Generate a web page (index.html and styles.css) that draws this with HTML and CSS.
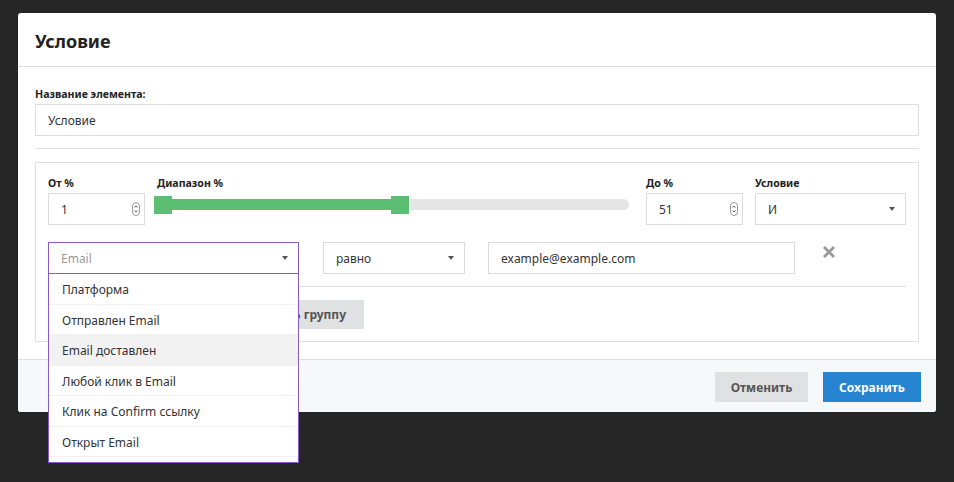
FILE: index.html
```html
<!DOCTYPE html>
<html lang="ru">
<head>
    <meta charset="UTF-8">
    <meta name="viewport" content="width=device-width, initial-scale=1.0">
    <title>Условие</title>
    <link rel="stylesheet" href="styles.css">
</head>
<body>

    <div class="page">
        <div class="modal">
            <div class="modal-header">
                <h2>Условие</h2>
            </div>

            <div class="modal-body">
                <label class="field-label">Название элемента:</label>
                <div class="text-input">Условие</div>

                <div class="divider"></div>

                <div class="group">
                    <div class="range-row">
                        <div class="col-from">
                            <label class="field-label">От %</label>
                            <div class="num-input">
                                <span>1</span>
                                <svg class="spin" width="8" height="14" viewBox="0 0 8 14"><rect x="0.5" y="0.5" width="7" height="13" rx="3.5" fill="#fff" stroke="#999"/><path d="M2.5 5.5 L4 4 L5.5 5.5 M2.5 8.5 L4 10 L5.5 8.5" fill="none" stroke="#555" stroke-width="1"/></svg>
                            </div>
                        </div>
                        <div class="col-range">
                            <label class="field-label range-label">Диапазон %</label>
                            <div class="range">
                                <div class="range-fill" style="width: 51.5%"></div>
                                <span class="handle" style="left: 0%"></span>
                                <span class="handle" style="left: 49.8%"></span>
                            </div>
                        </div>
                        <div class="col-to">
                            <label class="field-label">До %</label>
                            <div class="num-input">
                                <span>51</span>
                                <svg class="spin" width="8" height="14" viewBox="0 0 8 14"><rect x="0.5" y="0.5" width="7" height="13" rx="3.5" fill="#fff" stroke="#999"/><path d="M2.5 5.5 L4 4 L5.5 5.5 M2.5 8.5 L4 10 L5.5 8.5" fill="none" stroke="#555" stroke-width="1"/></svg>
                            </div>
                        </div>
                        <div class="col-cond">
                            <label class="field-label">Условие</label>
                            <div class="select">
                                <span>И</span>
                                <span class="caret"></span>
                            </div>
                        </div>
                    </div>

                    <div class="rule-row">
                        <div class="rule-field">
                            <div class="select select-open">
                                <span class="placeholder">Email</span>
                                <span class="caret"></span>
                            </div>
                            <ul class="dropdown">
                                <li>Платформа</li>
                                <li>Отправлен Email</li>
                                <li class="active">Email доставлен</li>
                                <li>Любой клик в Email</li>
                                <li>Клик на Confirm ссылку</li>
                                <li>Открыт Email</li>
                            </ul>
                        </div>
                        <div class="select rule-op">
                            <span>равно</span>
                            <span class="caret"></span>
                        </div>
                        <div class="text-input rule-value">example@example.com</div>
                        <svg class="remove" width="12" height="12" viewBox="0 0 12 12"><path d="M2 0 L6 4 L10 0 L12 2 L8 6 L12 10 L10 12 L6 8 L2 12 L0 10 L4 6 L0 2 Z" fill="#9a9a9a"/></svg>
                    </div>

                    <div class="group-divider"></div>

                    <div class="group-actions">
                        <button class="btn btn-light btn-add-group">Добавить группу</button>
                    </div>
                </div>
            </div>

            <div class="modal-footer">
                <button class="btn btn-light btn-cancel">Отменить</button>
                <button class="btn btn-primary btn-save">Сохранить</button>
            </div>
        </div>
    </div>

</body>
</html>
```

FILE: styles.css
```css
html,
body {
    height: 100%;
}
body {
    margin: 0;
    background-color: #262626;
    font-family: "Noto Sans", Arial, sans-serif;
    color: #333;
}
.page {
    padding: 13px 0 0 18px;
}
.modal {
    width: 918px;
    background-color: #fff;
    border-radius: 3px;
}
.modal-header {
    height: 54px;
    box-sizing: border-box;
    padding: 2px 17px 0;
    display: flex;
    align-items: center;
    border-bottom: 1px solid #dedede;
}
.modal-header h2 {
    margin: 0;
    font-size: 18px;
    font-weight: 700;
    color: #222;
}
.modal-body {
    padding: 20px 17px 17px;
}
.field-label {
    display: block;
    font-size: 10.6px;
    line-height: 14px;
    font-weight: 700;
    color: #222;
    margin-bottom: 3px;
}
.range-label {
    padding-left: 3px;
}
.text-input {
    height: 32px;
    box-sizing: border-box;
    border: 1px solid #dcdcdc;
    padding: 0 12px;
    font-size: 12px;
    display: flex;
    align-items: center;
    color: #333;
}
.divider {
    height: 1px;
    background-color: #e0e0e0;
    margin: 12px 0 13px;
}
.group {
    border: 1px solid #e0e0e0;
    padding: 13px 12px 12px;
}
.range-row {
    display: flex;
}
.col-from,
.col-to {
    width: 97px;
}
.col-from {
    margin-right: 9px;
}
.col-range {
    flex: 1;
    margin-right: 17px;
}
.col-to {
    margin-right: 12px;
}
.col-cond {
    width: 151px;
}
.num-input,
.select {
    height: 32px;
    box-sizing: border-box;
    border: 1px solid #dcdcdc;
    display: flex;
    align-items: center;
    justify-content: space-between;
    font-size: 12px;
    color: #333;
}
.num-input {
    padding: 0 4px 0 12px;
}
.select {
    padding: 0 10px 0 12px;
    background-color: #fff;
}
.caret {
    width: 0;
    height: 0;
    border-left: 3.5px solid transparent;
    border-right: 3.5px solid transparent;
    border-top: 4px solid #555;
}
.range {
    position: relative;
    height: 11px;
    margin-top: 9px;
    background-color: #e5e5e5;
    border-radius: 0 6px 6px 0;
}
.range-fill {
    height: 100%;
    background-color: #5bbe72;
}
.handle {
    position: absolute;
    top: -3px;
    width: 18px;
    height: 18px;
    background-color: #5bbe72;
}
.rule-row {
    display: flex;
    margin-top: 17px;
}
.rule-field {
    position: relative;
    width: 251px;
    margin-right: 24px;
}
.select-open {
    border-color: #8759c6;
}
.placeholder {
    color: #999;
}
.rule-op {
    width: 142px;
    margin-right: 23px;
}
.rule-value {
    width: 307px;
}
.remove {
    margin: 4px 0 0 28px;
}
.dropdown {
    position: absolute;
    top: 100%;
    left: 0;
    z-index: 10;
    width: 251px;
    box-sizing: border-box;
    margin: 0;
    padding: 0 0 5px;
    list-style: none;
    background-color: #fff;
    border: 1px solid #8759c6;
    border-top: none;
}
.dropdown li {
    height: 30.5px;
    box-sizing: border-box;
    padding: 2px 0 0 13px;
    display: flex;
    align-items: center;
    font-size: 12px;
    color: #333;
    border-bottom: 1px solid #f1f1f1;
}
.dropdown li.active {
    background-color: #f2f2f2;
}
.group-divider {
    height: 1px;
    background-color: #e0e0e0;
    margin: 12px 0 13px;
}
.group-actions {
    display: flex;
}
.btn {
    height: 30px;
    border: none;
    font-family: inherit;
    font-size: 12px;
    font-weight: 700;
    cursor: pointer;
}
.btn-light {
    background-color: #e0e1e3;
    color: #555;
}
.btn-add-group {
    margin-left: 166px;
    width: 150px;
    height: 29px;
    text-align: right;
    padding-right: 18px;
}
.btn-primary {
    background-color: #2784d1;
    color: #fff;
}
.modal-footer {
    display: flex;
    justify-content: flex-end;
    gap: 15px;
    padding: 12px 15px 10px;
    background-color: #f7f8fa;
    border-top: 1px solid #e0e0e0;
    border-radius: 0 0 3px 3px;
}
.btn-cancel {
    width: 93px;
}
.btn-save {
    width: 98px;
}
```
